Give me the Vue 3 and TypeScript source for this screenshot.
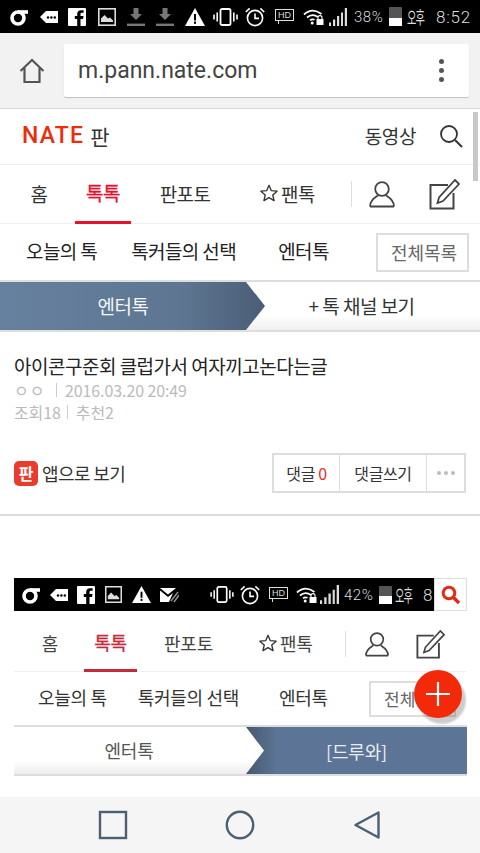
<template>
  <div class="phone">
    <!-- shared status bar glyphs -->
    <svg class="defs" width="0" height="0" aria-hidden="true">
      <symbol id="i-carrier" viewBox="0 0 18 18">
        <circle cx="8" cy="10" r="6" fill="none" stroke="#fff" stroke-width="3.600" />
        <rect x="8" y="2.200" width="10" height="3.600" fill="#fff" />
      </symbol>
      <symbol id="i-tag" viewBox="0 0 18 18">
        <path d="M6 3H18V15H6L0 9Z" fill="#fff" />
        <circle cx="8" cy="9.500" r="1.200" fill="#000" /><circle cx="11.400" cy="9.500" r="1.200" fill="#000" /><circle cx="14.800" cy="9.500" r="1.200" fill="#000" />
      </symbol>
      <symbol id="i-fb" viewBox="0 0 18 18">
        <path d="M1 0H17A1 1 0 0 1 18 1V17A1 1 0 0 1 17 18H12.500V11H15L15.500 8H12.500V6.200C12.500 5.200 13 4.800 14 4.800H15.600V2.200H13.200C10.600 2.200 9.200 3.600 9.200 6V8H6.800V11H9.200V18H1A1 1 0 0 1 0 17V1A1 1 0 0 1 1 0Z" fill="#fff" />
      </symbol>
      <symbol id="i-img" viewBox="0 0 18 18">
        <rect x="0.800" y="0.800" width="16.400" height="16.400" fill="none" stroke="#ddd" stroke-width="1.600" />
        <path d="M3 14V10.500L6.500 7 10 10.500 12 9.500 15 12.500V14Z" fill="#ddd" />
      </symbol>
      <symbol id="i-dl" viewBox="0 0 18 18">
        <path d="M6.500 0H11.500V6H15L9 12 3 6H6.500Z" fill="#777" />
        <rect x="0" y="15.600" width="18" height="2.400" fill="#777" />
      </symbol>
      <symbol id="i-warn" viewBox="0 0 20 18">
        <path d="M10 0 20 18H0Z" fill="#fff" />
        <rect x="9" y="6" width="2" height="6.500" fill="#000" /><rect x="9" y="13.600" width="2" height="2.200" fill="#000" />
      </symbol>
      <symbol id="i-vib" viewBox="0 0 25 18">
        <rect x="7.500" y="1" width="10" height="16" rx="1.600" fill="none" stroke="#fff" stroke-width="1.800" />
        <path d="M4.200 4.500V13.500M1 6.500V11.500M20.800 4.500V13.500M24 6.500V11.500" stroke="#fff" stroke-width="1.600" fill="none" />
      </symbol>
      <symbol id="i-alarm" viewBox="0 0 20 20">
        <circle cx="10" cy="11" r="7.600" fill="none" stroke="#fff" stroke-width="1.600" />
        <path d="M10 6.500V11.400H14M0.800 5 4.600 1.400M19.200 5 15.400 1.400" stroke="#fff" stroke-width="1.600" fill="none" />
      </symbol>
      <symbol id="i-wifi" viewBox="0 0 21 16">
        <path d="M1 5.500C6.500 0.500 12.500 0.500 18.500 5M4 8.500C7.500 5.400 11.500 5.400 15 8M7 11.400C8.600 10 10 10 11.500 10.800" fill="none" stroke="#fff" stroke-width="1.700" />
        <circle cx="9.200" cy="14" r="1.500" fill="#fff" />
        <rect x="13.500" y="10" width="7" height="6" fill="#fff" />
        <path d="M15 10V8.600A2 2 0 0 1 19 8.600V10" fill="none" stroke="#fff" stroke-width="1.100" />
      </symbol>
      <symbol id="i-signal" viewBox="0 0 18 18">
        <path d="M0 14.500H2V18H0ZM4 11.500H6.200V18H4ZM8 8H10.200V18H8ZM12 4.500H14V18H12ZM15.800 0H18V18H15.800Z" fill="#ddd" />
      </symbol>
      <symbol id="i-mail" viewBox="0 0 19 16">
        <path d="M0 1H16L8 7.500ZM0 3.500 8 10 13 6 9 15H0Z" fill="#fff" />
        <path d="M11 14 18 5M14 15 19 8" stroke="#888" stroke-width="1.600" fill="none" />
      </symbol>
      <symbol id="i-star" viewBox="0 0 20 20">
        <path d="M10 1.500 12.600 7.400 19 8 14.200 12.200 15.600 18.500 10 15.200 4.400 18.500 5.800 12.200 1 8 7.400 7.400Z" fill="none" stroke="#333" stroke-width="1.500" stroke-linejoin="round" />
      </symbol>
    </svg>

    <div class="status">
      <span v-for="(icon, i) in topIcons" :key="i" class="slot" :style="{ width: icon.slot + 'px' }">
        <span v-if="icon.id === 'hd'" class="hd">HD</span>
        <svg v-else :width="icon.w" :height="icon.h"><use :href="'#' + icon.id" /></svg>
      </span>
      <span class="pct">38%</span>
      <span class="battery"><span class="battery-fill" /></span>
      <span class="ampm">오후</span>
      <span class="clock">8:52</span>
    </div>

    <div class="urlbar">
      <svg class="home-ic" width="26" height="26" viewBox="0 0 26 26">
        <path d="M1.500 13 13 2 24.500 13M5.500 10V24H20.500V10" fill="none" stroke="#555" stroke-width="2.200" />
      </svg>
      <div class="omnibox">
        <span class="url">m.pann.nate.com</span>
        <span class="kebab"><i /><i /><i /></span>
      </div>
    </div>

    <div class="page">
      <header class="brand">
        <span class="logo">NATE</span>
        <span class="pan">판</span>
        <span class="video">동영상</span>
        <svg class="search" width="24" height="24" viewBox="0 0 24 24">
          <circle cx="10" cy="10" r="8" fill="none" stroke="#333" stroke-width="1.800" />
          <path d="M16 16 23 23" stroke="#333" stroke-width="2" />
        </svg>
      </header>

      <nav class="tabs">
        <span class="tab t1">홈</span>
        <span class="tab t2 on">톡톡</span>
        <span class="tab t3">판포토</span>
        <span class="tab t4"><svg class="star" width="18" height="18"><use href="#i-star" /></svg>팬톡</span>
        <span class="tab-sep" />
        <svg class="person" width="28" height="28" viewBox="0 0 28 28">
          <circle cx="14" cy="9" r="6.800" fill="none" stroke="#444" stroke-width="1.800" />
          <path d="M2 26.500C2 20 7 17.500 10 15.500M26 26.500C26 20 21 17.500 18 15.500M2 26.500H26" fill="none" stroke="#444" stroke-width="1.800" />
        </svg>
        <svg class="edit" width="31" height="31" viewBox="0 0 31 31">
          <path d="M19 6H1.500V29.500H24.500V14" fill="none" stroke="#444" stroke-width="2" />
          <path d="M26 1 30 5 14 22 8.500 24 10 18.500Z" fill="none" stroke="#444" stroke-width="1.800" />
        </svg>
      </nav>

      <div class="sub">
        <span class="s1">오늘의 톡</span>
        <span class="s2">톡커들의 선택</span>
        <span class="s3">엔터톡</span>
        <span class="all">전체목록</span>
      </div>

      <div class="channel">
        <span class="ch-left">엔터톡</span>
        <span class="ch-right">+ 톡 채널 보기</span>
      </div>

      <article class="post">
        <h1 class="title">아이콘구준회 클럽가서 여자끼고논다는글</h1>
        <p class="meta"><span class="who">ㅇㅇ</span><span class="bar" />2016.03.20 20:49</p>
        <p class="meta stats">조회18<span class="bar tight" />추천2</p>
        <div class="actions">
          <span class="app"><span class="app-ic">판</span>앱으로 보기</span>
          <div class="btns">
            <span class="btn b1">댓글 <em>0</em></span>
            <span class="btn b2">댓글쓰기</span>
            <span class="btn b3"><i /><i /><i /></span>
          </div>
        </div>
      </article>

      <section class="shot">
        <div class="shot-top">
          <div class="shot-status">
            <span v-for="(icon, i) in shotIcons" :key="i" class="slot" :style="{ width: icon.slot + 'px' }">
              <span v-if="icon.id === 'hd'" class="hd">HD</span>
              <svg v-else :width="icon.w" :height="icon.h"><use :href="'#' + icon.id" /></svg>
            </span>
            <span class="pct in">42%</span>
            <span class="battery in"><span class="battery-fill" /></span>
            <span class="ampm in">오후</span>
            <span class="clock in">8</span>
          </div>
          <span class="shot-search">
            <svg width="20" height="20" viewBox="0 0 20 20">
              <circle cx="8" cy="8" r="5.800" fill="none" stroke="#e62a12" stroke-width="3" />
              <path d="M12.500 12.500 18 18" stroke="#e62a12" stroke-width="3.400" />
            </svg>
          </span>
        </div>
        <nav class="tabs in">
          <span class="tab t1">홈</span>
          <span class="tab t2 on">톡톡</span>
          <span class="tab t3">판포토</span>
          <span class="tab t4"><svg class="star" width="18" height="18"><use href="#i-star" /></svg>팬톡</span>
          <span class="tab-sep" />
          <svg class="person" width="26" height="26" viewBox="0 0 28 28">
            <circle cx="14" cy="9" r="6.800" fill="none" stroke="#444" stroke-width="1.800" />
            <path d="M2 26.500C2 20 7 17.500 10 15.500M26 26.500C26 20 21 17.500 18 15.500M2 26.500H26" fill="none" stroke="#444" stroke-width="1.800" />
          </svg>
          <svg class="edit" width="29" height="29" viewBox="0 0 31 31">
            <path d="M19 6H1.500V29.500H24.500V14" fill="none" stroke="#444" stroke-width="2" />
            <path d="M26 1 30 5 14 22 8.500 24 10 18.500Z" fill="none" stroke="#444" stroke-width="1.800" />
          </svg>
        </nav>
        <div class="sub in">
          <span class="s1">오늘의 톡</span>
          <span class="s2">톡커들의 선택</span>
          <span class="s3">엔터톡</span>
          <span class="all">전체</span>
        </div>
        <div class="channel in">
          <span class="ch-right">[드루와]</span>
          <span class="ch-left">엔터톡</span>
        </div>
      </section>
    </div>

    <footer class="softkeys">
      <svg width="30" height="30" viewBox="0 0 30 30"><rect x="2" y="2" width="26" height="26" fill="none" stroke="#4c6072" stroke-width="2.400" /></svg>
      <svg width="30" height="30" viewBox="0 0 30 30"><circle cx="15" cy="15" r="13.200" fill="none" stroke="#4c6072" stroke-width="2.400" /></svg>
      <svg width="30" height="30" viewBox="0 0 30 30"><path d="M3.500 15 26.500 2.500V27.500Z" fill="none" stroke="#4c6072" stroke-width="2.400" stroke-linejoin="round" /></svg>
    </footer>

    <!-- things that float over the page -->
    <span class="scrollbar" />
    <span class="fab">
      <svg width="24" height="24" viewBox="0 0 24 24"><path d="M0 12H24M12 0V24" stroke="#fff" stroke-width="2.200" /></svg>
    </span>
  </div>
</template>

<script setup lang="ts">
interface StatusIcon {
  id: string;
  slot: number;
  w: number;
  h: number;
}

const topIcons: StatusIcon[] = [
  { id: 'i-carrier', slot: 30, w: 18, h: 18 },
  { id: 'i-tag', slot: 28, w: 18, h: 18 },
  { id: 'i-fb', slot: 30, w: 18, h: 18 },
  { id: 'i-img', slot: 29, w: 18, h: 18 },
  { id: 'i-dl', slot: 29, w: 18, h: 18 },
  { id: 'i-dl', slot: 29, w: 18, h: 18 },
  { id: 'i-warn', slot: 28, w: 20, h: 18 },
  { id: 'i-vib', slot: 32, w: 25, h: 18 },
  { id: 'i-alarm', slot: 30, w: 20, h: 20 },
  { id: 'hd', slot: 28, w: 19, h: 18 },
  { id: 'i-wifi', slot: 26, w: 21, h: 16 },
  { id: 'i-signal', slot: 25, w: 18, h: 18 }
];

const shotIcons: StatusIcon[] = [
  { id: 'i-carrier', slot: 28, w: 18, h: 18 },
  { id: 'i-tag', slot: 27, w: 18, h: 18 },
  { id: 'i-fb', slot: 28, w: 18, h: 18 },
  { id: 'i-img', slot: 27, w: 17, h: 17 },
  { id: 'i-warn', slot: 28, w: 19, h: 17 },
  { id: 'i-mail', slot: 50, w: 19, h: 16 },
  { id: 'i-vib', slot: 30, w: 24, h: 17 },
  { id: 'i-alarm', slot: 29, w: 20, h: 20 },
  { id: 'hd', slot: 27, w: 19, h: 18 },
  { id: 'i-wifi', slot: 24, w: 21, h: 16 },
  { id: 'i-signal', slot: 24, w: 19, h: 19 }
];
</script>

<style>
body {
  margin: 0;
  background: #fff;
}
</style>

<style scoped>
.phone {
  position: relative;
  width: 480px;
  height: 853px;
  overflow: hidden;
  display: flex;
  flex-direction: column;
  font-family: "Noto Sans CJK KR", "Noto Sans", sans-serif;
  color: #333;
  background: #fff;
}

.defs {
  position: absolute;
}

/* status bar */
.status {
  height: 33px;
  flex-shrink: 0;
  background: #000;
  display: flex;
  align-items: center;
  padding-left: 10px;
  color: #ddd;
}

.slot {
  display: flex;
  align-items: center;
  flex-shrink: 0;
}

.hd {
  position: relative;
  width: 19px;
  height: 12px;
  box-sizing: border-box;
  border: 1px solid #ddd;
  font-family: "Liberation Sans", sans-serif;
  font-size: 9px;
  line-height: 10px;
  text-align: center;
  margin-bottom: 3px;
}

.hd::after {
  content: "";
  position: absolute;
  left: 2px;
  top: 10px;
  width: 3px;
  height: 4px;
  border-left: 1px solid #ddd;
}

.pct {
  width: 35px;
  font-size: 15px;
  font-family: "Roboto", sans-serif;
  font-weight: 300;
  letter-spacing: 0.5px;
}

.battery {
  width: 13px;
  height: 19px;
  background: #555;
  margin-right: 5px;
  position: relative;
  border-radius: 1px 1px 0 0;
}

.battery-fill {
  position: absolute;
  left: 0;
  right: 0;
  bottom: 0;
  height: 8px;
  background: #fff;
}

.ampm {
  width: 29px;
  font-size: 12px;
  line-height: 1;
  letter-spacing: -1px;
  transform: scale(0.85, 1.45);
  transform-origin: left center;
}

.clock {
  font-size: 17px;
  font-family: "Roboto", sans-serif;
  font-weight: 300;
  letter-spacing: 0.8px;
}

/* browser bar */
.urlbar {
  height: 76px;
  flex-shrink: 0;
  box-sizing: border-box;
  background: #f2f2f2;
  border-bottom: 1px solid #ddd;
  display: flex;
  align-items: center;
  padding: 0 11px 0 19px;
}

.home-ic {
  margin-right: 19px;
}

.omnibox {
  flex: 1;
  height: 53px;
  box-sizing: border-box;
  background: #fff;
  border-radius: 2px;
  box-shadow: 0 1px 1px rgba(0, 0, 0, 0.2);
  display: flex;
  align-items: center;
  justify-content: space-between;
  padding: 0 25px 0 14px;
}

.url {
  font-family: "Roboto", sans-serif;
  font-size: 23px;
  color: #444;
}

.kebab {
  display: flex;
  flex-direction: column;
  gap: 4px;
}

.kebab i {
  width: 5px;
  height: 5px;
  border-radius: 50%;
  background: #555;
}

/* page */
.page {
  flex: 1;
  min-height: 0;
  overflow: hidden;
}

.brand {
  height: 56px;
  box-sizing: border-box;
  border-bottom: 1px solid #f0f0f0;
  display: flex;
  align-items: center;
  padding: 0 17px 2px 22px;
}

.logo {
  font-family: "Roboto", sans-serif;
  font-weight: 500;
  font-size: 23px;
  letter-spacing: 1.2px;
  color: #ee2c0c;
}

.pan {
  font-size: 21px;
  margin-left: 6px;
  color: #333;
}

.video {
  margin-left: auto;
  margin-right: 23px;
  font-size: 19px;
  letter-spacing: -0.4px;
}

.tabs {
  height: 59px;
  box-sizing: border-box;
  border-bottom: 1px solid #f0f0f0;
  display: flex;
  align-items: stretch;
  font-size: 19px;
}

.tab {
  display: flex;
  align-items: center;
  justify-content: center;
  box-sizing: border-box;
  padding-bottom: 2px;
  white-space: nowrap;
  letter-spacing: -0.6px;
}

.t1 { width: 75px; padding-left: 3px; }
.t2 { width: 56px; }
.t3 { width: 108px; }
.t4 { width: 112px; justify-content: flex-start; padding-left: 21px; }

.tab.on {
  color: #e8112d;
  -webkit-text-stroke: 0.3px #e8112d;
  border-bottom: 3px solid #e8112d;
  margin-bottom: -1px;
}

.star {
  margin-right: 3px;
  flex-shrink: 0;
}

.tab-sep {
  width: 1px;
  height: 26px;
  align-self: center;
  background: #ddd;
  margin-right: 16px;
}

.person {
  align-self: center;
  margin-right: 33px;
}

.edit {
  align-self: center;
}

.sub {
  height: 58px;
  box-sizing: border-box;
  border-bottom: 2px solid #ddd;
  display: flex;
  align-items: center;
  font-size: 19px;
  color: #222;
  letter-spacing: -0.6px;
  white-space: nowrap;
}

.s1,
.s2,
.s3 {
  position: relative;
  top: -2px;
}

.s1 { margin-left: 26px; }
.s2 { margin-left: 34px; }
.s3 { margin-left: 42px; }

.all {
  margin-left: auto;
  margin-right: 11px;
  width: 93px;
  height: 39px;
  box-sizing: border-box;
  border: 2px solid #ddd;
  display: flex;
  align-items: center;
  justify-content: center;
  padding-left: 3px;
  font-size: 18px;
  letter-spacing: 0;
  color: #666;
}

.channel {
  height: 50px;
  box-sizing: border-box;
  border-bottom: 2px solid #ddd;
  display: flex;
  align-items: center;
  font-size: 19px;
  background: linear-gradient(#fff 70%, #f0f0f0);
  letter-spacing: -0.5px;
}

.ch-left {
  width: 265px;
  align-self: stretch;
  box-sizing: border-box;
  padding: 0 19px 2px 0;
  display: flex;
  align-items: center;
  justify-content: center;
  color: #f4f6f8;
  background: linear-gradient(90deg, #66819f, #5d7590 70%, #4a5d76);
  clip-path: polygon(0 0, 246px 0, 100% 50%, 246px 100%, 0 100%);
}

.ch-right {
  flex: 1;
  text-align: center;
  padding: 0 22px 2px 0;
  color: #333;
}

/* article */
.post {
  padding: 21px 14px 0;
  height: 184px;
  box-sizing: border-box;
  border-bottom: 2px solid #ddd;
}

.title {
  margin: 0;
  font-size: 19px;
  font-weight: 400;
  line-height: 26px;
  color: #222;
  letter-spacing: -0.5px;
  white-space: nowrap;
}

.meta {
  margin: 0;
  font-size: 16px;
  line-height: 22px;
  color: #bbb;
  display: flex;
  align-items: center;
  letter-spacing: -0.1px;
}

.who {
  width: 38px;
  letter-spacing: 1px;
}

.bar {
  width: 1px;
  height: 14px;
  background: #ccc;
  margin: 0 8px 0 4px;
}

.bar.tight {
  margin: 0 8px 0 6px;
}

.actions {
  display: flex;
  align-items: center;
  justify-content: space-between;
  margin-top: 30px;
}

.app {
  display: flex;
  align-items: center;
  font-size: 18px;
  color: #333;
  letter-spacing: -0.6px;
}

.app-ic {
  width: 24px;
  height: 25px;
  border-radius: 5px;
  background: #ea3b2e;
  color: #fff;
  font-size: 16px;
  font-weight: 700;
  line-height: 24px;
  text-align: center;
  margin-right: 4px;
  letter-spacing: 0;
}

.btns {
  display: flex;
  height: 40px;
  box-sizing: border-box;
  border: 2px solid #ddd;
}

.btn {
  display: flex;
  align-items: center;
  justify-content: center;
  box-sizing: border-box;
  font-size: 16px;
  letter-spacing: -0.4px;
  color: #333;
  white-space: pre;
}

.btn em {
  font-style: normal;
  color: #ee2c1c;
}

.b1 { width: 66px; border-right: 1px solid #ddd; }
.b2 { width: 87px; border-right: 1px solid #ddd; }

.b3 {
  width: 37px;
  gap: 3px;
}

.b3 i {
  width: 4px;
  height: 4px;
  border-radius: 50%;
  background: #bbb;
}

/* embedded screenshot */
.shot {
  margin: 62px 13px 0 14px;
  color: #444;
}

.shot-top {
  display: flex;
  height: 33px;
}

.shot-status {
  width: 420px;
  background: #000;
  display: flex;
  align-items: center;
  padding-left: 8px;
  box-sizing: border-box;
  color: #ddd;
  overflow: hidden;
}

.pct.in { width: 35px; }
.battery.in { height: 18px; margin-right: 3px; }
.ampm.in { width: 28px; }

.shot-search {
  flex: 1;
  display: flex;
  align-items: center;
  justify-content: center;
  border: 1px solid #ddd;
}

.tabs.in {
  height: 55px;
  margin-top: 6px;
  font-size: 18px;
}

.tabs.in .tab { letter-spacing: -0.2px; }
.tabs.in .t1 { width: 70px; padding-left: 2px; }
.tabs.in .t2 {
  width: 53px;
  color: #c8283c;
  -webkit-text-stroke-color: #c8283c;
  border-bottom-color: #c8283c;
}
.tabs.in .t3 { width: 103px; }
.tabs.in .t4 { width: 105px; padding-left: 19px; }
.tabs.in .tab-sep { margin-right: 18px; }
.tabs.in .person { margin-right: 26px; }

.sub.in {
  height: 55px;
  font-size: 18px;
  letter-spacing: -0.3px;
  color: #333;
}

.sub.in .s1 { margin-left: 24px; }
.sub.in .s2 { margin-left: 31px; }
.sub.in .s3 { margin-left: 40px; }

.sub.in .all {
  width: 87px;
  height: 36px;
  margin-right: 11px;
  justify-content: flex-start;
  padding-left: 13px;
  font-size: 17px;
}

.channel.in {
  height: 49px;
  position: relative;
  font-size: 18px;
  letter-spacing: -0.2px;
  background: linear-gradient(#fff 70%, #f0f0f0);
}

.channel.in .ch-left {
  position: absolute;
  left: 0;
  top: 0;
  bottom: 0;
  width: 250px;
  color: #555;
  background: linear-gradient(#fff 70%, #eee);
  padding-right: 20px;
  clip-path: polygon(0 0, 232px 0, 100% 50%, 232px 100%, 0 100%);
}

.channel.in .ch-right {
  margin-left: 232px;
  align-self: stretch;
  padding: 0;
  display: flex;
  align-items: center;
  justify-content: center;
  color: #e8ecf2;
  background: linear-gradient(90deg, #46586f, #5c7596 14%);
}

/* android keys */
.softkeys {
  height: 56px;
  flex-shrink: 0;
  background: #f5f5f5;
  display: flex;
  align-items: center;
  justify-content: center;
  gap: 97px;
}

/* overlays */
.scrollbar {
  position: absolute;
  left: 473px;
  top: 112px;
  width: 5px;
  height: 69px;
  background: #c8c8c8;
}

.fab {
  position: absolute;
  left: 414px;
  top: 670px;
  width: 48px;
  height: 48px;
  border-radius: 50%;
  background: #f22a0a;
  box-shadow: 4px 6px 2px rgba(0, 0, 0, 0.2);
  display: flex;
  align-items: center;
  justify-content: center;
}
</style>
